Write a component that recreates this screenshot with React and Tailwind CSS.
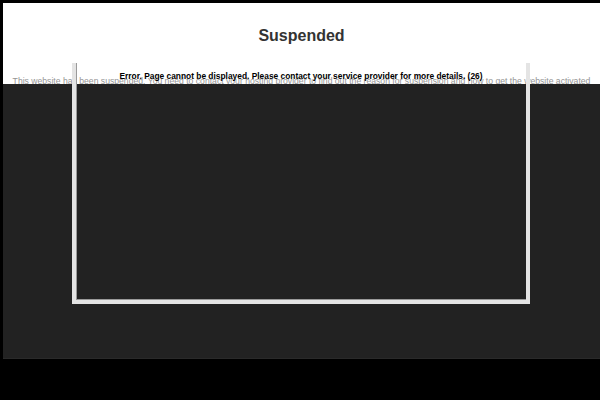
export default function App() {
  return (
    <div className="w-[600px] h-[400px] bg-black pt-[3px] pl-[3px] font-['Liberation_Sans',Arial,sans-serif]">
      <div className="relative h-[356px] flex flex-col">
        <div className="h-[81px] bg-white flex flex-col items-center">
          <h1 className="mt-[23px] text-[16px] leading-5 font-bold text-[#333]">Suspended</h1>
          <p className="mt-[30px] text-[8.65px] leading-[11px] text-[#949494] whitespace-nowrap">
            This website has been suspended. You need to contact your hosting provider to find out the reason for suspension and how to get the website activated
          </p>
        </div>
        <div className="flex-1 bg-[#222] border-b border-[#2a2a2a]"></div>
        <div className="absolute left-[69px] top-[60px] w-[458px] h-[241px] border-4 border-t-0 border-[#e4e4e4] shadow-[inset_1px_-1px_0_#9a9a9a] flex justify-center">
          <p className="mt-[7px] text-[8.4px] leading-3 font-bold text-black whitespace-nowrap">
            Error. Page cannot be displayed. Please contact your service provider for more details. (26)
          </p>
        </div>
      </div>
    </div>
  );
}
